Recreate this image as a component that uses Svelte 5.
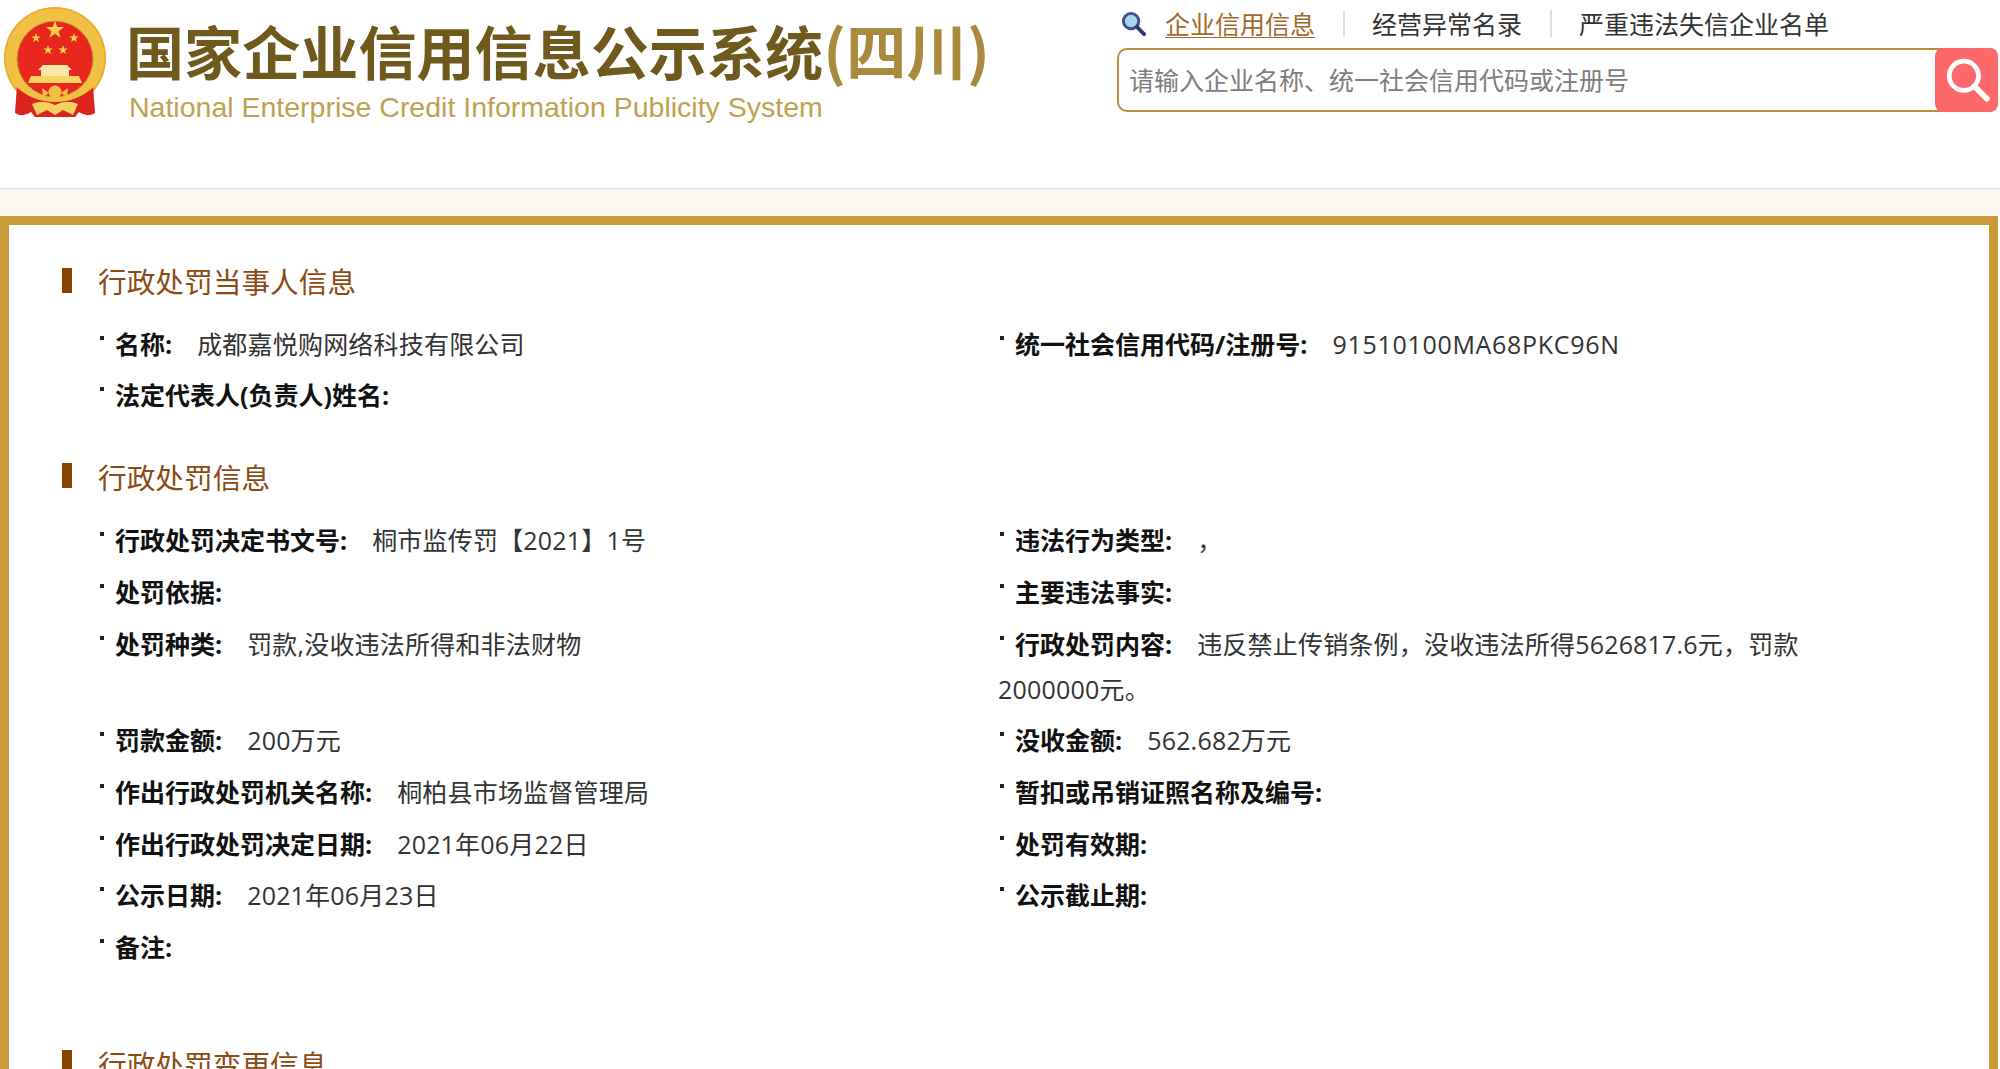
<script lang="ts">
	// 行政处罚详情页 (四川)
	type Field = { label: string; value?: string; code?: boolean };
	type Row = Field[];

	const partyRows: Row[] = [
		[
			{ label: '名称', value: '成都嘉悦购网络科技有限公司' },
			{ label: '统一社会信用代码/注册号', value: '91510100MA68PKC96N', code: true }
		],
		[{ label: '法定代表人(负责人)姓名' }]
	];

	const penaltyRows: Row[] = [
		[
			{ label: '行政处罚决定书文号', value: '桐市监传罚【2021】1号' },
			{ label: '违法行为类型', value: '，' }
		],
		[{ label: '处罚依据' }, { label: '主要违法事实' }],
		[
			{ label: '处罚种类', value: '罚款,没收违法所得和非法财物' },
			{ label: '行政处罚内容', value: '违反禁止传销条例，没收违法所得5626817.6元，罚款2000000元。' }
		],
		[
			{ label: '罚款金额', value: '200万元' },
			{ label: '没收金额', value: '562.682万元' }
		],
		[
			{ label: '作出行政处罚机关名称', value: '桐柏县市场监督管理局' },
			{ label: '暂扣或吊销证照名称及编号' }
		],
		[{ label: '作出行政处罚决定日期', value: '2021年06月22日' }, { label: '处罚有效期' }],
		[{ label: '公示日期', value: '2021年06月23日' }, { label: '公示截止期' }],
		[{ label: '备注' }]
	];

	const star = 'M0-10 2.4-3.1 9.5-3.1 3.8 1.2 5.9 8.1 0 4 -5.9 8.1 -3.8 1.2 -9.5-3.1 -2.4-3.1Z';
</script>

{#snippet fieldRows(rows: Row[])}
	<div class="rows">
		{#each rows as row}
			{#each row as field}
				<p class="field">
					<b>{field.label}:</b>{#if field.value}<span class:code={field.code}>{field.value}</span>{/if}
				</p>
			{/each}
		{/each}
	</div>
{/snippet}

<div class="page">
	<header class="top">
		<div class="brand">
			<svg class="emblem" viewBox="0 0 104 112" aria-hidden="true">
				<circle cx="52" cy="51" r="51" fill="#f2c043" />
				<circle cx="52" cy="51" r="50" fill="none" stroke="#e6ab33" stroke-width="1.500" />
				<circle cx="52" cy="52" r="38" fill="#e8281f" stroke="#c49a35" />
				<g fill="#f6cf4c">
					<path d={star} transform="translate(52 23) scale(.95)" />
					<path d={star} transform="translate(33 31) scale(.5)" />
					<path d={star} transform="translate(71 31) scale(.5)" />
					<path d={star} transform="translate(45 43) scale(.5)" />
					<path d={star} transform="translate(60 43) scale(.5)" />
				</g>
				<path d="M40 58h24l5 5h-3v6H38v-6h-3Z" fill="#fbe6a8" />
				<path d="M28 69h48l3 7H25Z" fill="#f8d563" />
				<path d="M14 78Q30 88 40 92H64Q74 88 90 78L92 106Q84 111 76 105L72 110H32L28 105Q20 111 12 106Z" fill="#dc241d" />
				<path d="M13 77Q30 93 52 93T91 77" fill="none" stroke="#f2c043" stroke-width="4" />
				<circle cx="52" cy="85" r="6.500" fill="#f2c043" />
				<path d="M39 81 46 86 40 90ZM65 81 58 86 64 90Z" fill="#f2c043" />
				<path d="M29 97Q40 92 52 98 64 92 75 97L70 108 60 103 52 108 44 103 34 108Z" fill="#f6d35e" />
			</svg>
			<div class="brand-text">
				<h1>国家企业信用信息公示系统<em>(四川)</em></h1>
				<p>National Enterprise Credit Information Publicity System</p>
			</div>
		</div>
		<div class="search">
			<nav>
				<svg class="lens" viewBox="0 0 26 26" aria-hidden="true">
					<circle cx="10.500" cy="10.500" r="8" fill="#a9d3ec" stroke="#3f4d8c" stroke-width="3" />
					<path d="M16.500 16.500 24 24" stroke="#2f3a78" stroke-width="4" stroke-linecap="round" />
				</svg>
				<a class="active" href="#info">企业信用信息</a>
				<i></i>
				<a href="#abnormal">经营异常名录</a>
				<i></i>
				<a href="#illegal">严重违法失信企业名单</a>
			</nav>
			<div class="search-box">
				<input type="text" placeholder="请输入企业名称、统一社会信用代码或注册号" />
				<button type="button" aria-label="搜索">
					<svg viewBox="0 0 44 44" aria-hidden="true">
						<circle cx="19" cy="18" r="14" fill="none" stroke="#fff" stroke-width="4.500" />
						<path d="M29 28 41 40" stroke="#fff" stroke-width="5.500" stroke-linecap="round" />
					</svg>
				</button>
			</div>
		</div>
	</header>

	<div class="band"></div>

	<main class="frame">
		<section class="party">
			<h2>行政处罚当事人信息</h2>
			{@render fieldRows(partyRows)}
		</section>
		<section class="penalty">
			<h2>行政处罚信息</h2>
			{@render fieldRows(penaltyRows)}
		</section>
		<section class="changes">
			<h2>行政处罚变更信息</h2>
		</section>
	</main>
</div>

<style>
	:global(body) {
		background: #fff;
	}

	.page {
		height: 100vh;
		overflow: hidden;
		font-family: 'Noto Sans CJK SC', 'Noto Sans', sans-serif;
		color: #333;
	}

	.top {
		display: flex;
		justify-content: space-between;
		height: 189px;
		padding-right: 2px;
		box-sizing: border-box;
		border-bottom: 1px solid #e3e0da;
	}

	.brand {
		display: flex;
		align-items: flex-start;
		gap: 22px;
		padding: 7px 0 0 3px;
	}

	.emblem {
		width: 104px;
		height: 112px;
		flex: none;
	}

	h1 {
		margin: 0 0 1px -3px;
		padding-top: 4px;
		font-size: 58.100px;
		line-height: 76px;
		font-weight: 700;
		color: #6f5a1d;
		white-space: nowrap;
	}

	h1 em {
		font-style: normal;
		color: #a98b40;
		font-size: 60.500px;
	}

	.brand-text p {
		margin: 0;
		font-family: 'Liberation Sans', Arial, sans-serif;
		font-size: 28.500px;
		line-height: 36px;
		color: #c0a152;
		white-space: nowrap;
	}

	.search {
		width: 881px;
	}

	nav {
		display: flex;
		align-items: center;
		height: 46px;
		margin-bottom: 2px;
		padding-left: 4px;
		font-size: 25px;
		line-height: 36px;
	}

	nav a {
		color: #333;
		text-decoration: none;
	}

	nav a.active {
		color: #a5692b;
		text-decoration: underline;
		text-underline-offset: 3px;
		text-decoration-thickness: 1px;
	}

	nav i {
		width: 2px;
		height: 27px;
		margin: 0 27.500px;
		background: #dedede;
	}

	.lens {
		width: 25px;
		height: 25px;
		margin-right: 19px;
	}

	.search-box {
		display: flex;
		height: 64px;
		box-sizing: border-box;
		border: 2px solid #b98c3e;
		border-right: 0;
		border-radius: 10px;
	}

	.search-box input {
		flex: 1;
		min-width: 0;
		border: 0;
		outline: 0;
		background: none;
		padding: 0 10px 2px;
		font: inherit;
		font-size: 25px;
		color: #333;
	}

	.search-box input::placeholder {
		color: #7d7d7d;
		opacity: 1;
	}

	.search-box button {
		width: 63px;
		margin: -2px 0;
		padding: 0;
		border: 0;
		border-radius: 8px;
		background: #fd696a;
		display: flex;
		align-items: center;
		justify-content: center;
	}

	.search-box button svg {
		width: 46px;
		height: 46px;
	}

	.band {
		height: 27px;
		background: #fbf6ef;
	}

	.frame {
		margin-right: 2px;
		border: solid #c99a38;
		border-width: 9px 9px 0;
		padding: 36px 53px 60px;
	}

	section.penalty {
		margin-top: 38.500px;
	}

	section.changes {
		margin-top: 73.500px;
	}

	h2 {
		display: flex;
		align-items: center;
		gap: 26px;
		margin: 0 0 20.500px;
		font-size: 28.700px;
		line-height: 40px;
		font-weight: 400;
		color: #8c4b12;
	}

	h2::before {
		content: '';
		width: 10px;
		height: 25px;
		background: #864400;
		flex: none;
		position: relative;
		top: -1px;
	}

	.penalty h2 {
		margin-bottom: 21.500px;
	}

	.rows {
		display: grid;
		grid-template-columns: 900px 880px;
		row-gap: 6.700px;
		padding-left: 36px;
		font-family: 'Open Sans', 'Noto Sans CJK SC', sans-serif;
	}

	.field {
		margin: 0;
		font-size: 25px;
		line-height: 45px;
		min-height: 45px;
	}

	.field::before {
		content: '';
		display: inline-block;
		width: 4px;
		height: 4px;
		margin: 0 11px 0 2px;
		background: #222;
		vertical-align: 14px;
	}

	.field b {
		font-weight: 700;
		color: #111;
	}

	.field span {
		margin-left: 25px;
		letter-spacing: 0.2px;
	}

	.field span.code {
		letter-spacing: 0.7px;
	}

	.changes h2 {
		margin-bottom: 0;
	}
</style>
